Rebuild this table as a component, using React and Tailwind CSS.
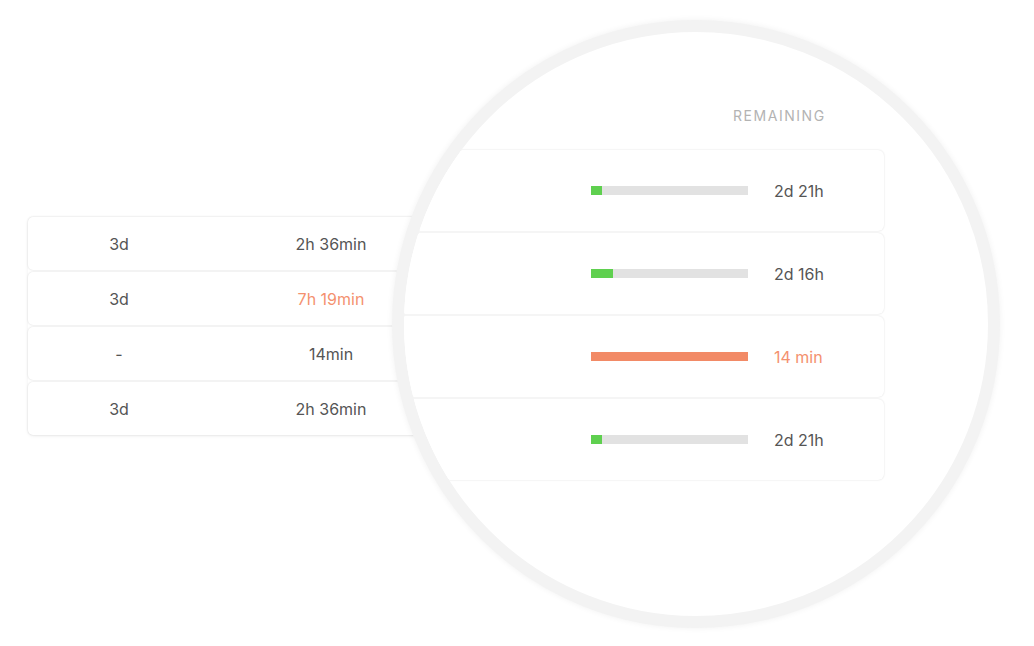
import React from "react";

const smallRows = [
  { est: "3d", spent: "2h 36min", late: false },
  { est: "3d", spent: "7h 19min", late: true },
  { est: "-", spent: "14min", late: false },
  { est: "3d", spent: "2h 36min", late: false },
];

const bigRows = [
  { fill: 11, left: "2d 21h", late: false },
  { fill: 22, left: "2d 16h", late: false },
  { fill: 157, left: "14 min", late: true },
  { fill: 11, left: "2d 21h", late: false },
];

const App = () => {
  return (
    <div
      className="relative w-[1034px] h-[646px] bg-white overflow-hidden"
      style={{ fontFamily: "Inter, 'Noto Sans', sans-serif" }}
    >
      {/* ---------------- SMALL TABLE ---------------- */}
      <div className="pt-[217px] pl-[28px]">
        <div className="w-[440px] flex flex-col gap-[2px] rounded-md shadow-[0_1px_4px_rgba(0,0,0,0.06)]">
          {smallRows.map((row, i) => (
            <div
              key={i}
              className="h-[53px] bg-white rounded-[5px] shadow-[0_0_2px_rgba(0,0,0,0.16)] flex items-center text-[16px] text-[#555]"
            >
              <span className="w-[182px] text-center">{row.est}</span>
              <span
                className={
                  "w-[242px] text-center " +
                  (row.late ? "text-[#f4916f]" : "text-[#555]")
                }
              >
                {row.spent}
              </span>
            </div>
          ))}
        </div>
      </div>

      {/* ---------------- MAGNIFIER ---------------- */}
      <div className="absolute left-[392px] top-[20px] w-[608px] h-[608px] rounded-full border-[12px] border-[#f3f3f3] bg-white overflow-hidden shadow-[0_0_6px_rgba(0,0,0,0.06)]">
        <div className="pt-[76px] w-[480px]">
          <div className="flex justify-end">
            <span className="w-[151px] text-[14px] leading-4 tracking-[0.11em] text-[#b3b3b3]">
              REMAINING
            </span>
          </div>
          <div className="mt-[26px] flex flex-col gap-[2px]">
            {bigRows.map((row, i) => (
              <div
                key={i}
                className="h-[81px] -ml-[20px] bg-white rounded-r-[6px] shadow-[0_0_2px_rgba(0,0,0,0.14)] flex justify-end items-center"
              >
                <div className="w-[157px] h-[9px] bg-[#e2e2e2] mr-[26px]">
                  <div
                    className={
                      "h-full " + (row.late ? "bg-[#f28a66]" : "bg-[#5fd04f]")
                    }
                    style={{ width: row.fill }}
                  />
                </div>
                <span
                  className={
                    "w-[110px] text-[16px] " +
                    (row.late ? "text-[#f4916f]" : "text-[#555]")
                  }
                >
                  {row.left}
                </span>
              </div>
            ))}
          </div>
        </div>
      </div>
    </div>
  );
};

export default App;
